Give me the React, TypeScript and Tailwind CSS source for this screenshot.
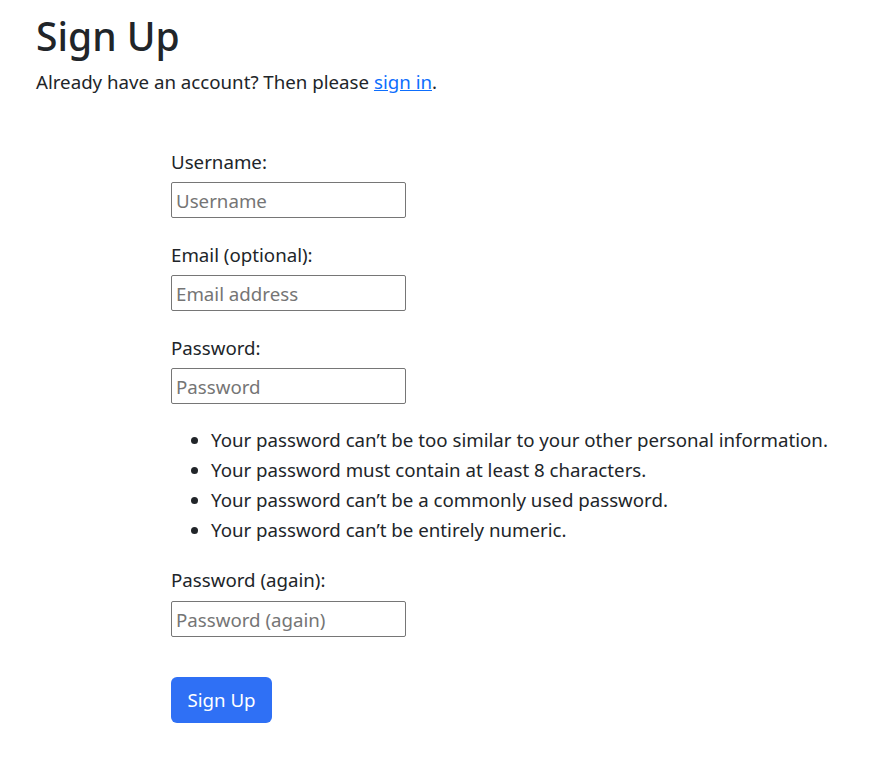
const rules = [
  "Your password can’t be too similar to your other personal information.",
  "Your password must contain at least 8 characters.",
  "Your password can’t be a commonly used password.",
  "Your password can’t be entirely numeric.",
];

function Field({ label, placeholder, type = "text", gap = "mt-[5px]" }: { label: string; placeholder: string; type?: string; gap?: string }) {
  return (
    <div className="flex flex-col">
      <label className="leading-[30px]">{label}</label>
      <input
        type={type}
        placeholder={placeholder}
        className={`${gap} h-[36px] w-[235px] rounded-[2px] border border-[#767676] px-[4px] text-[18.7px] placeholder:text-[#757575] outline-none`}
      />
    </div>
  );
}

export default function App() {
  return (
    <div className="min-h-screen bg-white px-[36px] pt-[8px] text-[18.7px] leading-[30px] text-[#212529] [font-family:'Noto_Sans',sans-serif]">
      <h1 className="text-[39px] font-medium leading-[56px]">Sign Up</h1>
      <p className="mt-[3px]">
        Already have an account? Then please{" "}
        <a href="#" className="text-[#0d6efd] underline">
          sign in
        </a>
        .
      </p>

      <form className="ml-[135px] mt-[50px] flex flex-col">
        <Field label="Username:" placeholder="Username" />
        <div className="mt-[22px]">
          <Field label="Email (optional):" placeholder="Email address" type="email" />
        </div>
        <div className="mt-[22px]">
          <Field label="Password:" placeholder="Password" type="password" />
        </div>
        <ul className="mt-[21px] list-disc pl-[40px]">
          {rules.map((r) => (
            <li key={r}>{r}</li>
          ))}
        </ul>
        <div className="mt-[20px]">
          <Field label="Password (again):" placeholder="Password (again)" type="password" gap="mt-[6px]" />
        </div>
        <div className="mt-[40px]">
          <button
            type="button"
            className="h-[46px] w-[101px] rounded-[6px] bg-[#2f70f5] text-white"
          >
            Sign Up
          </button>
        </div>
      </form>
    </div>
  );
}
